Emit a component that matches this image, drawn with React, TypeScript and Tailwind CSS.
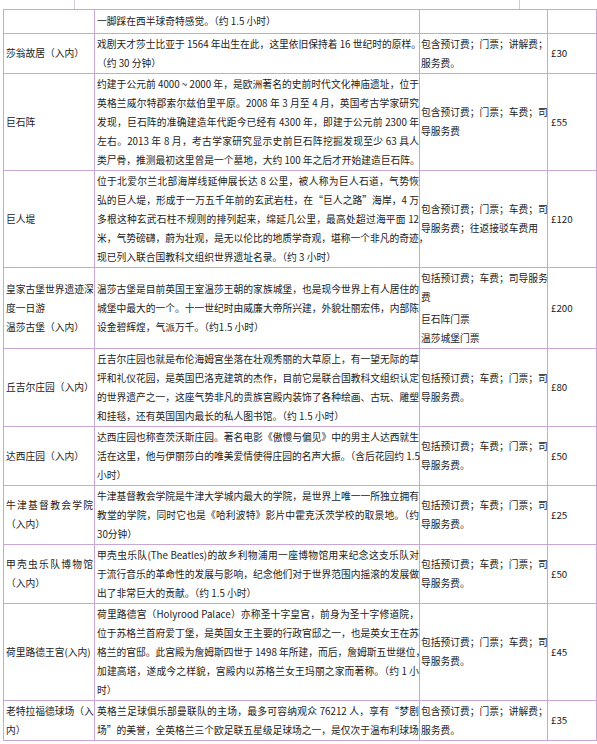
import React from "react";

type Line = string | null;
type Row = {
  name: Line[];
  nameJ?: number;
  desc: Line[];
  inc: Line[];
  price: string;
};

const rows: Row[] = [
  {
    name: ["莎翁故居（入内）"],
    desc: [
      "戏剧天才莎士比亚于 1564 年出生在此，这里依旧保持着 16 世纪时的原样。",
      "（约 30 分钟）",
    ],
    inc: ["包含预订费；门票；讲解费；", "服务费。"],
    price: "£30",
  },
  {
    name: ["巨石阵"],
    desc: [
      "约建于公元前 4000 ~ 2000 年，是欧洲著名的史前时代文化神庙遗址，位于",
      "英格兰威尔特郡索尔兹伯里平原。2008 年 3 月至 4 月，英国考古学家研究",
      "发现，巨石阵的准确建造年代距今已经有 4300 年，即建于公元前 2300 年",
      "左右。2013 年 8 月，考古学家研究显示史前巨石阵挖掘发现至少 63 具人",
      "类尸骨，推测最初这里曾是一个墓地，大约 100 年之后才开始建造巨石阵。",
    ],
    inc: ["包含预订费；门票；车费；司", "导服务费"],
    price: "£55",
  },
  {
    name: ["巨人堤"],
    desc: [
      "位于北爱尔兰北部海岸线延伸展长达 8 公里，被人称为巨人石道，气势恢",
      "弘的巨人堤，形成于一万五千年前的玄武岩柱，在“巨人之路”海岸，4 万",
      "多根这种玄武石柱不规则的排列起来，绵延几公里，最高处超过海平面 12",
      "米，气势磅礴，蔚为壮观，是无以伦比的地质学奇观，堪称一个非凡的奇迹，",
      "现已列入联合国教科文组织世界遗址名录。（约 3 小时）",
    ],
    inc: ["包含预订费；门票；车费；司", "导服务费；往返接驳车费用"],
    price: "£120",
  },
  {
    name: ["皇家古堡世界遗迹深", "度一日游", "温莎古堡（入内）"],
    nameJ: 1,
    desc: [
      "温莎古堡是目前英国王室温莎王朝的家族城堡，也是现今世界上有人居住的",
      "城堡中最大的一个。十一世纪时由威廉大帝所兴建，外貌壮丽宏伟，内部陈",
      "设金碧辉煌，气派万千。（约1.5 小时）",
    ],
    inc: ["包括预订费；车费；司导服务", "费", null, "巨石阵门票", "温莎城堡门票"],
    price: "£200",
  },
  {
    name: ["丘吉尔庄园（入内）"],
    desc: [
      "丘吉尔庄园也就是布伦海姆宫坐落在壮观秀丽的大草原上，有一望无际的草",
      "坪和礼仪花园，是英国巴洛克建筑的杰作，目前它是联合国教科文组织认定",
      "的世界遗产之一，这座气势非凡的贵族宫殿内装饰了各种绘画、古玩、雕塑",
      "和挂毯，还有英国国内最长的私人图书馆。（约 1.5 小时）",
    ],
    inc: ["包括预订费；车费；门票；司", "导服务费。"],
    price: "£80",
  },
  {
    name: ["达西庄园（入内）"],
    desc: [
      "达西庄园也称查茨沃斯庄园。著名电影《傲慢与偏见》中的男主人达西就生",
      "活在这里，他与伊丽莎白的唯美爱情使得庄园的名声大振。（含后花园约 1.5",
      "小时）",
    ],
    inc: ["包括预订费；车费；门票；司", "导服务费。"],
    price: "£50",
  },
  {
    name: ["牛津基督教会学院", "（入内）"],
    desc: [
      "牛津基督教会学院是牛津大学城内最大的学院，是世界上唯一一所独立拥有",
      "教堂的学院，同时它也是《哈利波特》影片中霍克沃茨学校的取景地。（约",
      "30分钟）",
    ],
    inc: ["包括预订费；车费；门票；司", "导服务费。"],
    price: "£25",
  },
  {
    name: ["甲壳虫乐队博物馆", "（入内）"],
    desc: [
      "甲壳虫乐队(The Beatles)的故乡利物浦用一座博物馆用来纪念这支乐队对",
      "于流行音乐的革命性的发展与影响，纪念他们对于世界范围内摇滚的发展做",
      "出了非常巨大的贡献。（约 1.5 小时）",
    ],
    inc: ["包括预订费；车费；门票；司", "导服务费。"],
    price: "£50",
  },
  {
    name: ["荷里路德王宫(入内)"],
    desc: [
      "荷里路德宫（Holyrood Palace）亦称圣十字皇宫，前身为圣十字修道院，",
      "位于苏格兰首府爱丁堡，是英国女王主要的行政官邸之一，也是英女王在苏",
      "格兰的官邸。此宫殿为詹姆斯四世于 1498 年所建，而后，詹姆斯五世继位，",
      "加建高塔，遂成今之样貌，宫殿内以苏格兰女王玛丽之家而著称。（约 1 小",
      "时）",
    ],
    inc: ["包括预订费；门票；车费；司", "导服务费。"],
    price: "£45",
  },
  {
    name: ["老特拉福德球场（入", "内）"],
    desc: [
      "英格兰足球俱乐部曼联队的主场，最多可容纳观众 76212 人，享有“梦剧",
      "场”的美誉，全英格兰三个欧足联五星级足球场之一，是仅次于温布利球场",
    ],
    inc: ["包含预订费；门票；讲解费；", "服务费。"],
    price: "£35",
  },
];

function Lines({ lines, justifyUntil }: { lines: Line[]; justifyUntil: number }) {
  return (
    <>
      {lines.map((l, i) =>
        l === null ? (
          <div key={i} className="h-[3px]" />
        ) : (
          <div
            key={i}
            className={
              i < justifyUntil
                ? "whitespace-nowrap text-justify [text-align-last:justify]"
                : "whitespace-nowrap"
            }
          >
            {l}
          </div>
        )
      )}
    </>
  );
}

const cell = "border-r border-b border-[#c9a6d6] flex flex-col justify-center";
const cols = "grid grid-cols-[91px_325px_128px_49px]";

export default function App() {
  return (
    <div className="w-[597px] h-[744px] overflow-hidden bg-white text-[#222] text-[9.75px] leading-[19px] [font-family:'Noto_Sans_CJK_SC','Liberation_Sans',sans-serif]">
      <div className="flex h-[9px]">
        <div className="w-[75px] border-r border-[#d6c6dc]" />
        <div className="w-[445px] border-r border-[#d6c6dc]" />
      </div>
      <div className="ml-[3px] w-[594px] border-l border-t border-[#c9a6d6]">
        <div className={cols}>
          <div className={cell + " pl-[2px] py-[2px]"} />
          <div className={cell + " pl-[2px] py-[2px]"}>
            <div>一脚踩在西半球奇特感觉。（约 1.5 小时）</div>
          </div>
          <div className={cell + " pl-px"} />
          <div className={cell + " pl-[3px]"} />
        </div>
        {rows.map((r, i) => (
          <div key={i} className={cols}>
            <div className={cell + " pl-[2px] pr-[1px] py-[0.5px]"}>
              <Lines lines={r.name} justifyUntil={r.nameJ ?? r.name.length - 1} />
            </div>
            <div className={cell + " pl-[2px] py-[0.5px]"}>
              <Lines lines={r.desc} justifyUntil={r.desc.length - 1} />
            </div>
            <div className={cell + " pl-px py-[0.5px]"}>
              <Lines lines={r.inc} justifyUntil={0} />
            </div>
            <div className={cell + " pl-[3px] py-[0.5px]"}>
              <div>{r.price}</div>
            </div>
          </div>
        ))}
      </div>
    </div>
  );
}
